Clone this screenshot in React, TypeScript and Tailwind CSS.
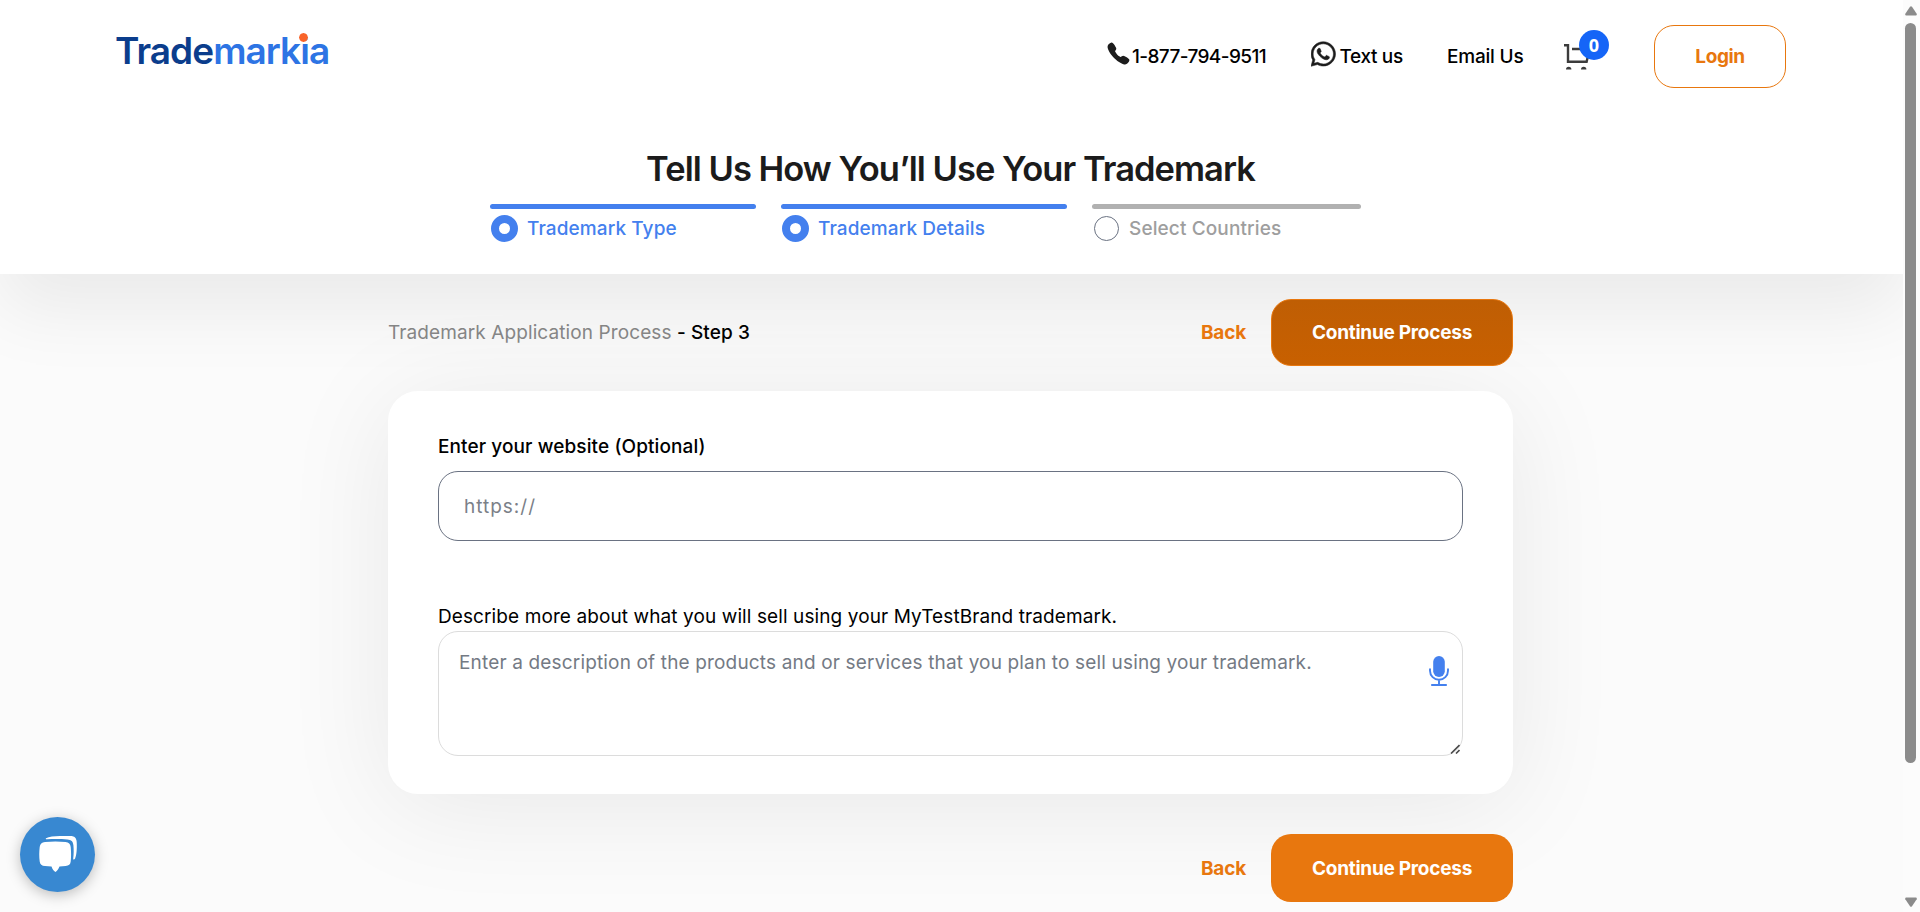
import { FaWhatsapp } from 'react-icons/fa';
import { IoCall } from 'react-icons/io5';

function Logo() {
  return (
    <a className="relative mb-[12px] block text-[37px] leading-[44px] font-semibold tracking-[-0.95px] whitespace-nowrap">
      <span className="text-[#0b3d8c]">Trade</span>
      <span className="text-[#2d74e4]">markia</span>
      <span className="absolute top-[4px] right-[21px] size-[9px] rounded-full bg-[#f9642a] outline-1 outline-white" />
    </a>
  );
}

function CartIcon() {
  return (
    <svg width="28" height="28" viewBox="0 0 28 28" fill="none" stroke="#3c3c3c" strokeWidth="2.400">
      <path d="M0 2.200h4v16.600h18.600l3-12.800H8" />
      <path d="M2 26.500a2.700 2.700 0 1 1 5.400 0zM17 26.500a2.700 2.700 0 1 1 5.400 0z" fill="#3c3c3c" stroke="none" />
    </svg>
  );
}

function MicIcon() {
  return (
    <svg width="20" height="30" viewBox="0 0 20 30" fill="none" stroke="#4480ee" strokeWidth="1.900">
      <rect x="4.200" y="0" width="11.600" height="21" rx="5.800" fill="#4480ee" stroke="none" />
      <path d="M1 12.500v2.300a9 9 0 0 0 18 0v-2.300M10 24v5M2.200 29h15.600" />
    </svg>
  );
}

function ChatIcon() {
  return (
    <svg width="75" height="75" viewBox="0 0 75 75" fill="#fff">
      <path d="M26 21.200c3-1.500 8-2.200 14-2.200h10.500c4 0 6 2 6.200 6 .4 7-.1 13-1.600 16.500-.5 1.200-2 1.600-1.900.2.6-4.500.6-9 .2-13.400-.4-4-2-5.600-6-5.900-7-.5-14-.5-20.500-.1-1 .1-1.400-.8-.9-1.100z" />
      <path d="M25 24.900c7-.7 14-.7 20.500 0 3.300.4 4.900 2 5.200 5 .5 5 .5 10 0 14.700-.3 3-1.900 4.200-5 4.500l-6.200.5c-1 2.300-2.300 4.300-4 5.500-2-1.300-3.200-3.200-4-5.500l-6.500-.5c-3.200-.3-4.900-1.600-5.300-4.600-.6-4.800-.6-9.600 0-14.500.4-3.200 2-4.700 5.300-5.100z" />
    </svg>
  );
}

function Step({ label, done, width }: { label: string; done: boolean; width: string }) {
  return (
    <div className={width}>
      <div className={done ? 'h-[5px] rounded-full bg-[#4480ee]' : 'h-[5px] rounded-full bg-[#b1b1b1]'} />
      <div className="mt-[6px] flex h-[27px] items-center">
        {done ? (
          <span className="ml-[1px] size-[27px] shrink-0 rounded-full border-[8.5px] border-[#4480ee] bg-white" />
        ) : (
          <span className="mr-[1px] ml-[2px] size-[25px] shrink-0 rounded-full border border-gray-500 bg-white" />
        )}
        <span
          className={
            done
              ? 'ml-[9px] pt-[2px] text-[19px] font-medium tracking-[0.1px] text-[#4480ee]'
              : 'ml-[9px] pt-[2px] text-[19px] font-medium tracking-[0.12px] text-[#9e9e9e]'
          }
        >
          {label}
        </span>
      </div>
    </div>
  );
}

function Actions({ hovered }: { hovered: boolean }) {
  return (
    <div className="flex items-center">
      <button className="mr-[25px] pt-[2px] text-[19px] font-bold tracking-[-0.2px] text-[#e8770e]">Back</button>
      <button
        className={
          hovered
            ? 'h-[67px] w-[242px] rounded-[20px] border border-[#e8770e] bg-linear-to-b from-[#bf5e04] to-[#c86000] pt-[2px] text-[19px] font-bold tracking-[-0.25px] text-white'
            : 'h-[68px] w-[242px] rounded-[20px] bg-[#e8770e] pt-[2px] text-[19px] font-bold tracking-[-0.25px] text-white'
        }
      >
        Continue Process
      </button>
    </div>
  );
}

function Header() {
  return (
    <header className="relative z-0 h-[274px] shrink-0 bg-white pt-[25px] shadow-[0_35px_70px_rgba(0,0,0,0.07)]">
      <div className="flex h-[63px] items-center pr-[117px] pl-[115px] text-[19px] font-medium whitespace-nowrap text-black">
        <Logo />
        <a className="ml-auto flex w-[158px] items-center">
          <IoCall className="-ml-[2px] mb-[6px] size-[25px] text-[#1c1c1c]" />
          <span className="ml-[1px] pt-[2px] tracking-[-0.6px]">1-877-794-9511</span>
        </a>
        <a className="ml-[45px] flex w-[92px] items-center">
          <FaWhatsapp className="mb-[5px] h-[28px] w-[24.500px] text-[#1c1c1c]" stroke="currentColor" strokeWidth="10" />
          <span className="ml-[4px] pt-[2px] tracking-[-0.35px]">Text us</span>
        </a>
        <a className="ml-[44px] w-[77px] pt-[2px] tracking-[-0.2px]">Email Us</a>
        <a className="relative ml-[40px] block h-[28px] w-[45px]">
          <CartIcon />
          <span className="absolute -top-[13px] left-[15px] flex size-[30px] items-center justify-center rounded-full bg-[#1565f7] pt-[1px] font-['Open_Sans',sans-serif] text-[18px] font-bold text-white">
            0
          </span>
        </a>
        <button className="ml-[45px] h-[63px] w-[132px] rounded-[20px] border border-[#e8770e] pt-[2px] text-[19px] font-bold tracking-[-0.4px] text-[#e8770e]">
          Login
        </button>
      </div>
      <h1 className="mt-[57px] h-[48px] pr-[2px] text-center text-[34.500px] leading-[48px] font-semibold tracking-[-0.97px] text-[#1b1b1b]">
        Tell Us How You’ll Use Your Trademark
      </h1>
      <div className="mt-[11px] ml-[490px] flex">
        <Step label="Trademark Type" done width="mr-[25px] w-[266px]" />
        <Step label="Trademark Details" done width="mr-[25px] w-[286px]" />
        <Step label="Select Countries" done={false} width="w-[269px]" />
      </div>
    </header>
  );
}

function Scrollbar() {
  return (
    <div className="flex w-[17px] shrink-0 flex-col items-center bg-[#fcfcfc] pt-[6px] pr-[2px] pb-[5px]">
      <svg width="12" height="10" viewBox="0 0 12 10" fill="#8b8b8b">
        <path d="M5 .8q1-1 2 0l4.700 7q.5 1.500-1 1.700H1.300q-1.500-.2-1-1.700z" />
      </svg>
      <div className="mt-[7px] h-[740px] w-[11px] rounded-full bg-[#8b8b8b]" />
      <svg className="mt-auto" width="12" height="10" viewBox="0 0 12 10" fill="#8b8b8b">
        <path d="M5 9.200q1 1 2 0l4.700-7q.5-1.500-1-1.700H1.300q-1.500.2-1 1.700z" />
      </svg>
    </div>
  );
}

export default function App() {
  return (
    <div className="flex h-[912px] w-[1920px] overflow-hidden bg-[#fbfbfb] font-['Inter',sans-serif]">
      <div className="relative flex flex-1 flex-col overflow-hidden">
        <Header />
        <main className="relative z-10 ml-[388px] w-[1125px] pt-[25px]">
          <div className="flex h-[67px] items-center justify-between">
            <p className="pt-[2px] text-[19px]">
              <span className="tracking-[0.1px] text-[#858585]">Trademark Application Process</span>{' '}
              <span className="font-medium tracking-[0.1px] text-black">- Step 3</span>
            </p>
            <Actions hovered />
          </div>
          <section className="mt-[25px] h-[403px] rounded-[30px] bg-white px-[50px] pt-[44px] shadow-[0_12px_110px_rgba(0,0,0,0.08)]">
            <label className="block h-[24px] text-[19px] leading-[24px] font-medium tracking-[0.1px] text-black">
              Enter your website (Optional)
            </label>
            <input
              className="mt-[12px] block h-[70px] w-full rounded-[20px] border border-gray-500 px-[25px] text-[19px] tracking-[1px] placeholder:text-[#7b8088]"
              placeholder="https://"
            />
            <p className="mt-[64px] h-[24px] text-[19px] leading-[24px] tracking-[0.1px] text-black">
              Describe more about what you will sell using your MyTestBrand trademark.
            </p>
            <div className="relative mt-[2px]">
              <textarea
                className="block h-[125px] w-full resize-none rounded-[20px] border border-[#dcdcdc] px-[20px] pt-[19px] text-[19px] leading-[24px] tracking-[0.16px] placeholder:text-[#747a84]"
                placeholder="Enter a description of the products and or services that you plan to sell using your trademark."
              />
              <span className="absolute top-[25px] right-[14px]">
                <MicIcon />
              </span>
              <svg className="absolute right-[3px] bottom-[2px]" width="10" height="10" stroke="#4b4b4b" strokeWidth="1.600">
                <path d="M1 9.500 9.500 1M6 9.500 9.500 6" />
              </svg>
            </div>
          </section>
          <div className="mt-[40px] flex justify-end">
            <Actions hovered={false} />
          </div>
        </main>
        <button className="absolute bottom-[20px] left-[20px] z-20 size-[75px] rounded-full bg-[#3888d1] shadow-[0_3px_14px_rgba(0,0,0,0.25)]">
          <ChatIcon />
        </button>
      </div>
      <Scrollbar />
    </div>
  );
}
